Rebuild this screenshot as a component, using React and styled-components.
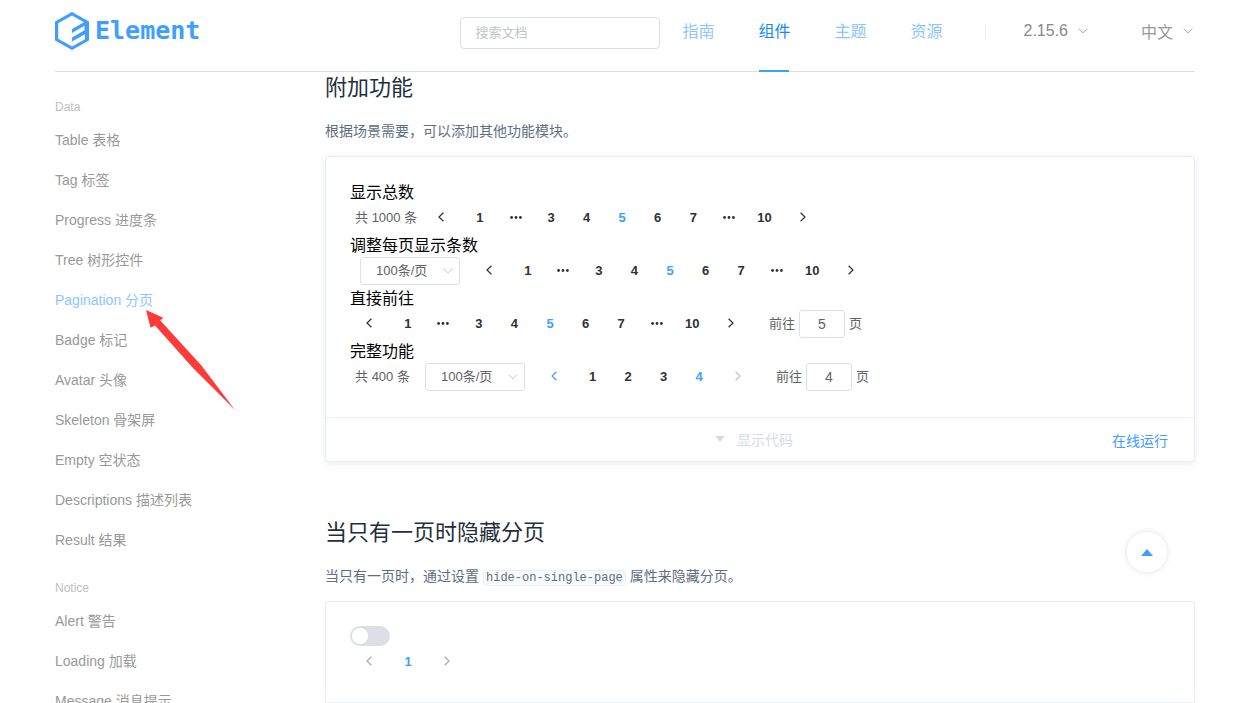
import React from 'react';
import styled, { createGlobalStyle, css } from 'styled-components';

const blue = '#409eff';

const GlobalStyle = createGlobalStyle`
  *, *::before, *::after { box-sizing: border-box; }
  body {
    margin: 0;
    background: #fff;
    color: #000;
    font-family: "Liberation Sans", "Noto Sans CJK SC", sans-serif;
    font-size: 16px;
  }
  button, input, select { font-family: inherit; }
`;

const Shell = styled.div`
  height: 100vh;
  display: flex;
  flex-direction: column;
  padding: 0 39px 0 55px;
  overflow: hidden;
`;

/* ---------- header ---------- */

const Header = styled.header`
  flex: none;
  display: flex;
  height: 72px;
  padding-right: 2px;
  border-bottom: 1px solid #dcdfe6;
`;

const Logo = styled.a`
  display: flex;
  align-items: center;
  gap: 6px;
  height: 62px;
  color: ${blue};
  text-decoration: none;
  font: 700 25px/62px "DejaVu Sans Mono", monospace;
`;

const Search = styled.input`
  width: 200px;
  height: 32px;
  margin: 17px 0 0 auto;
  padding: 0 14px 2px;
  border: 1px solid #dcdfe6;
  border-radius: 4px;
  background: #fff;
  color: #606266;
  font-size: 13px;
  outline: none;
  &::placeholder { color: #c0c4cc; opacity: 1; }
`;

const Nav = styled.nav`
  display: flex;
`;

const NavLink = styled.a`
  position: relative;
  padding: 0 22px 8px;
  line-height: 64px;
  color: ${(p) => (p.$active ? '#1989fa' : '#8cc5ff')};
  text-decoration: none;
  ${(p) =>
    p.$active &&
    css`
      &::after {
        content: '';
        position: absolute;
        left: 23px;
        right: 23px;
        bottom: -1px;
        height: 2px;
        background: ${blue};
      }
    `}
`;

const Divider = styled.span`
  width: 1px;
  height: 16px;
  margin: 24px 38px 0 20px;
  background: #ebebeb;
`;

const Picker = styled.button`
  display: flex;
  align-items: center;
  gap: 10px;
  height: 62px;
  padding: 0;
  border: 0;
  background: none;
  color: ${(p) => (p.$soft ? '#999' : '#888')};
  font-size: 16px;
  & + & { margin-left: 53px; }
`;

/* ---------- body ---------- */

const Body = styled.div`
  flex: 1;
  min-height: 0;
  display: flex;
`;

const Sidebar = styled.aside`
  flex: none;
  width: 270px;
  padding-top: 7px;
`;

const GroupTitle = styled.h4`
  margin: 15px 0 0;
  color: #c0c0c0;
  font-size: 12px;
  font-weight: 400;
  line-height: 26px;
`;

const LinkList = styled.ul`
  margin: 0;
  padding: 0;
  list-style: none;
`;

const LinkItem = styled.li`
  position: relative;
`;

const SideLink = styled.a`
  display: block;
  color: ${(p) => (p.$active ? '#8cc5ff' : '#999')};
  font-size: 14px;
  line-height: 40px;
  text-decoration: none;
`;

const Pointer = styled.svg`
  position: absolute;
  z-index: 2;
  left: 90px;
  top: 29px;
  pointer-events: none;
`;

const Main = styled.main`
  flex: 1;
  min-width: 0;
`;

const Section = styled.section`
  & + & { margin-top: 55px; }
`;

const Title = styled.h3`
  margin: 0 0 18px;
  color: #1f2f3d;
  font-size: 22px;
  font-weight: 400;
  line-height: 31px;
`;

const Note = styled.p`
  margin: 0 0 14px;
  color: #5e6d82;
  font-size: 14px;
  line-height: 21px;
`;

const Code = styled.code`
  margin: 0 4px;
  padding: 0 2px;
  border: 1px solid #eaeefb;
  border-radius: 4px;
  background: #f9fafc;
  font-family: "Liberation Mono", monospace;
  font-size: 12px;
  line-height: 12px;
`;

const Card = styled.div`
  border: 1px solid #ebebeb;
  border-radius: 3px;
  ${(p) =>
    p.$raised &&
    css`
      box-shadow: 0 0 8px 0 rgba(232, 237, 250, 0.6), 0 2px 4px 0 rgba(232, 237, 250, 0.5);
    `}
`;

const Demo = styled.div`
  padding: 24px;
`;

const DemoLabel = styled.div`
  height: 21px;
  line-height: 23px;
`;

const Control = styled.div`
  display: grid;
  grid-template-columns: 1fr auto 1fr;
  align-items: center;
  height: 44px;
  padding: 0 26px;
  border-top: 1px solid #eaeefb;
`;

const Toggle = styled.button`
  grid-column: 2;
  display: flex;
  align-items: center;
  gap: 12px;
  margin-right: 12px;
  padding: 0 0 2px;
  border: 0;
  background: none;
  color: #d3dce6;
  font-size: 14px;
`;

const RunLink = styled.a`
  justify-self: end;
  color: ${blue};
  font-size: 14px;
  text-decoration: none;
`;

/* ---------- pagination ---------- */

const Bar = styled.div`
  display: flex;
  height: 32px;
  padding: 2px 5px;
  color: #606266;
  font-size: 13px;
  line-height: 28px;
`;

const Total = styled.span`
  margin-right: 10px;
`;

const SizeBox = styled.label`
  position: relative;
  margin: 0 15px 0 5px;
  svg {
    position: absolute;
    right: 7px;
    top: 9px;
    pointer-events: none;
  }
`;

const SizeSelect = styled.select`
  appearance: none;
  display: block;
  width: 100px;
  height: 28px;
  padding: 0 24px 2px 15px;
  border: 1px solid #dcdfe6;
  border-radius: 3px;
  background: #fff;
  color: #606266;
  font-size: 13px;
  outline: none;
`;

const Step = styled.button`
  display: flex;
  align-items: center;
  justify-content: center;
  width: 35px;
  height: 26px;
  padding: ${(p) => (p.$next ? '0 0 0 7px' : '0 7px 0 0')};
  border: 0;
  background: none;
  color: ${(p) => p.$color || '#303133'};
`;

const Pages = styled.div`
  display: grid;
  grid-auto-flow: column;
  grid-auto-columns: 1fr;
  width: ${(p) => p.$width}px;
`;

const Page = styled.button`
  display: flex;
  align-items: center;
  justify-content: center;
  height: 26px;
  padding: 0;
  border: 0;
  background: none;
  color: ${(p) => (p.$active ? blue : '#303133')};
  font-size: 13px;
  font-weight: 700;
`;

const Jump = styled.label`
  display: flex;
  gap: 4px;
  margin-left: 24px;
`;

const JumpInput = styled.input`
  width: 46px;
  height: 28px;
  padding: 0 3px;
  border: 1px solid #dcdfe6;
  border-radius: 3px;
  color: #606266;
  font-size: 14px;
  text-align: center;
  outline: none;
`;

const Switch = styled.input`
  appearance: none;
  display: block;
  width: 40px;
  height: 20px;
  margin: 0;
  border-radius: 10px;
  background: #dcdfe6;
  &::before {
    content: '';
    display: block;
    width: 16px;
    height: 16px;
    margin: 2px;
    border-radius: 50%;
    background: #fff;
  }
`;

const BackTop = styled.button`
  position: fixed;
  right: 67px;
  bottom: 131px;
  display: flex;
  align-items: center;
  justify-content: center;
  width: 40px;
  height: 40px;
  padding: 0;
  border: 0;
  border-radius: 50%;
  background: #fff;
  box-shadow: 0 0 6px rgba(0, 0, 0, 0.12);
`;

/* ---------- icons ---------- */

const LogoMark = () => (
  <svg width="34" height="38" viewBox="0 0 34 38" aria-hidden="true">
    <path
      fill={blue}
      fillRule="evenodd"
      d="M17 0 34 9.5V28.5L17 38 0 28.5V9.5ZM17 3.6 3.2 11.3V26.7L17 34.4 30 27.2V22.3L17 29.5V25.5L29.5 18.2V13.8L17 21V17L29 10.3Z"
    />
  </svg>
);

const Down = ({ color = '#a5a9b0' }) => (
  <svg width="10" height="10" viewBox="0 0 10 10" fill="none" stroke={color} aria-hidden="true">
    <path d="M.7 2.6 5 6.9 9.3 2.6" />
  </svg>
);

const Arrow = ({ next }) => (
  <svg width="8" height="10" viewBox="0 0 8 10" fill="none" stroke="currentColor" strokeWidth="1.2" aria-hidden="true">
    <path d={next ? 'M1.6.8 6 5 1.6 9.2' : 'M6.4.8 2 5l4.4 4.2'} />
  </svg>
);

const Dots = () => (
  <svg width="12" height="4" viewBox="0 0 12 4" fill="currentColor" aria-hidden="true">
    <circle cx="1.6" cy="2.5" r="1.4" />
    <circle cx="6" cy="2.5" r="1.4" />
    <circle cx="10.4" cy="2.5" r="1.4" />
  </svg>
);

/* ---------- composed parts ---------- */

function Sizes() {
  return (
    <SizeBox>
      <SizeSelect aria-label="每页条数" defaultValue="100">
        <option value="100">100条/页</option>
      </SizeSelect>
      <Down color="#c0c4cc" />
    </SizeBox>
  );
}

function Pagination({ total, sizes, pages, width, current, jump, prevColor, nextColor }) {
  return (
    <Bar>
      {total && <Total>共 {total} 条</Total>}
      {sizes && <Sizes />}
      <Step aria-label="上一页" $color={prevColor}>
        <Arrow />
      </Step>
      <Pages $width={width}>
        {pages.map((p, i) => (
          <Page key={i} $active={p === current} aria-label={p ? undefined : '更多'}>
            {p || <Dots />}
          </Page>
        ))}
      </Pages>
      <Step $next aria-label="下一页" $color={nextColor}>
        <Arrow next />
      </Step>
      {jump && (
        <Jump>
          前往
          <JumpInput defaultValue={current} />
          页
        </Jump>
      )}
    </Bar>
  );
}

const longPages = [1, 0, 3, 4, 5, 6, 7, 0, 10];

const groups = [
  {
    title: 'Data',
    links: [
      'Table 表格',
      'Tag 标签',
      'Progress 进度条',
      'Tree 树形控件',
      'Pagination 分页',
      'Badge 标记',
      'Avatar 头像',
      'Skeleton 骨架屏',
      'Empty 空状态',
      'Descriptions 描述列表',
      'Result 结果',
    ],
  },
  { title: 'Notice', links: ['Alert 警告', 'Loading 加载', 'Message 消息提示'] },
];

const activeLink = 'Pagination 分页';

export default function App() {
  return (
    <>
      <GlobalStyle />
      <Shell>
        <Header>
          <Logo href="#">
            <LogoMark />
            Element
          </Logo>
          <Search placeholder="搜索文档" aria-label="搜索文档" />
          <Nav>
            {['指南', '组件', '主题', '资源'].map((t) => (
              <NavLink key={t} href="#" $active={t === '组件'}>
                {t}
              </NavLink>
            ))}
          </Nav>
          <Divider />
          <Picker>
            2.15.6
            <Down color="#b5aa9c" />
          </Picker>
          <Picker $soft>
            中文
            <Down />
          </Picker>
        </Header>

        <Body>
          <Sidebar>
            {groups.map((g) => (
              <React.Fragment key={g.title}>
                <GroupTitle>{g.title}</GroupTitle>
                <LinkList>
                  {g.links.map((l) => (
                    <LinkItem key={l}>
                      <SideLink href="#" $active={l === activeLink}>
                        {l}
                      </SideLink>
                      {l === activeLink && (
                        <Pointer width="92" height="102" viewBox="0 0 92 102" aria-hidden="true">
                          <path fill="#fd3b3b" d="M1 1 18.300 8.800 15.300 11.500 56 56 90 101 48 59 10 16.500 5.500 18.800Z" />
                        </Pointer>
                      )}
                    </LinkItem>
                  ))}
                </LinkList>
              </React.Fragment>
            ))}
          </Sidebar>

          <Main>
            <Section>
              <Title>附加功能</Title>
              <Note>根据场景需要，可以添加其他功能模块。</Note>
              <Card $raised>
                <Demo>
                  <DemoLabel>显示总数</DemoLabel>
                  <Pagination total={1000} pages={longPages} width={320} current={5} />
                  <DemoLabel>调整每页显示条数</DemoLabel>
                  <Pagination sizes pages={longPages} width={320} current={5} />
                  <DemoLabel>直接前往</DemoLabel>
                  <Pagination pages={longPages} width={320} current={5} jump />
                  <DemoLabel>完整功能</DemoLabel>
                  <Pagination
                    total={400}
                    sizes
                    pages={[1, 2, 3, 4]}
                    width={142}
                    current={4}
                    jump
                    prevColor={blue}
                    nextColor="#c0c4cc"
                  />
                </Demo>
                <Control>
                  <Toggle>
                    <svg width="10" height="6" viewBox="0 0 10 6" fill="currentColor" aria-hidden="true">
                      <path d="M0 0h10L5 6z" />
                    </svg>
                    显示代码
                  </Toggle>
                  <RunLink href="#">在线运行</RunLink>
                </Control>
              </Card>
            </Section>

            <Section>
              <Title>当只有一页时隐藏分页</Title>
              <Note>
                当只有一页时，通过设置<Code>hide-on-single-page</Code>属性来隐藏分页。
              </Note>
              <Card>
                <Demo>
                  <Switch type="checkbox" role="switch" aria-label="单页时隐藏" />
                  <Pagination pages={[1]} width={36} current={1} prevColor="#a8abb2" nextColor="#a8abb2" />
                </Demo>
                <Control />
              </Card>
            </Section>
          </Main>
        </Body>
      </Shell>
      <BackTop aria-label="回到顶部">
        <svg width="12" height="7" viewBox="0 0 12 7" fill={blue} aria-hidden="true">
          <path d="M6 0 12 7H0z" />
        </svg>
      </BackTop>
    </>
  );
}
